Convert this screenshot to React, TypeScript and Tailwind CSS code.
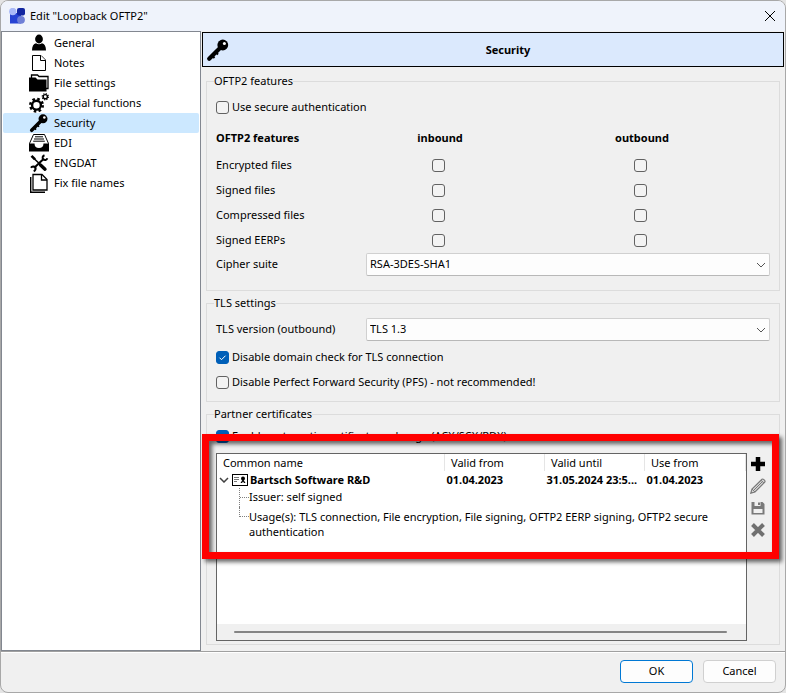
import type { ReactNode } from 'react';

type NavItem = { label: string; icon: ReactNode };

function KeyIcon({ className }: { className: string }) {
  return (
    <svg viewBox="0 0 24 24" className={className} aria-hidden="true">
      <circle cx="16.800" cy="7" r="5.400" fill="#000" />
      <path d="M14 10 3.200 20.800" stroke="#000" strokeWidth="4.200" strokeLinecap="round" />
      <path d="m6.500 18 2 2M10 14.500l2 2" stroke="#000" strokeWidth="2" />
      <circle cx="18.400" cy="5.400" r="1.500" fill="#fff" />
    </svg>
  );
}

function PersonIcon() {
  return (
    <svg viewBox="0 0 20 20" className="size-5" aria-hidden="true">
      <ellipse cx="10" cy="6" rx="3.900" ry="4.400" />
      <path d="M3 17.500c0-4 1.400-6.700 4-7.300 1.800 1.300 4.200 1.300 6 0 2.600.6 4 3.300 4 7.300z" />
    </svg>
  );
}

function PageIcon() {
  return (
    <svg viewBox="0 0 20 20" className="size-5" fill="#fff" stroke="#000" aria-hidden="true">
      <path d="M3.500 2.500h8.500l4.500 4.500v10.500h-13z" />
      <path d="M11.500 2.500v5h5" />
    </svg>
  );
}

function FolderIcon() {
  return (
    <svg viewBox="0 0 20 20" className="size-5" aria-hidden="true">
      <path d="M2.500 5V2h6l1.500 1.500h9v12H17" fill="#fff" stroke="#000" strokeWidth="1.300" />
      <path d="M0 4.500h6.500L8.500 6.500H17.500v12H0z" />
    </svg>
  );
}

function GearsIcon() {
  return (
    <svg viewBox="0 0 20 20" className="size-5" fill="none" stroke="#000" aria-hidden="true">
      <circle cx="7.500" cy="12.200" r="4.400" strokeWidth="2.400" />
      <circle cx="7.500" cy="12.200" r="6.200" strokeWidth="2.600" strokeDasharray="2.500 2.370" />
      <circle cx="16.300" cy="3.700" r="2.100" strokeWidth="1.400" />
      <circle cx="16.300" cy="3.700" r="3.100" strokeWidth="1.200" strokeDasharray="1.200 1.235" />
    </svg>
  );
}

function InboxIcon() {
  return (
    <svg viewBox="0 0 20 20" className="size-5" aria-hidden="true">
      <path d="M4.500 1.500h11l4 9v7H.5v-7z" fill="#fff" stroke="#000" />
      <path d="M6 3.800h8M5 6h10M4.200 8.200h11.600" stroke="#000" />
      <path d="M0 10.500h5.500c0 3 1.700 4.500 4.500 4.500s4.500-1.500 4.500-4.500H20v8H0z" />
    </svg>
  );
}

function ToolsIcon() {
  return (
    <svg viewBox="0 0 20 20" className="size-5" fill="none" stroke="#000" aria-hidden="true">
      <path d="m5 5.500 10 9.500" strokeWidth="1.500" />
      <path d="M14.500 6 5 15" strokeWidth="2" />
      <path d="m11.500 12 4.500 4.200" strokeWidth="3.400" strokeLinecap="round" />
      <path d="m2.500 2.800 3.500 3.500" strokeWidth="2.600" />
      <path d="M15.500 2.200c-2 .8-2.500 2.800-1.200 4 1.300 1.300 3.500.9 4-1M2 14.800c1-1.700 3.200-1.800 4.200-.6 1 1.300.3 3.300-1.500 4" strokeWidth="2" />
    </svg>
  );
}

function PagesIcon() {
  return (
    <svg viewBox="0 0 20 20" className="size-5" fill="none" stroke="#000" aria-hidden="true">
      <path d="M1.700 4v15.200H16" strokeWidth="1.400" />
      <path d="M4 1.500h9l5 5v10.500H4z" fill="#fff" strokeWidth="1.300" />
      <path d="M12.500 1.500v5.500H18" strokeWidth="1.300" />
    </svg>
  );
}

function LogoIcon() {
  return (
    <svg viewBox="0 0 16 16" className="size-4" aria-hidden="true">
      <path d="M1 5h11v10.500H1z" fill="#2743d3" />
      <rect x="8" y="0" width="8" height="7.500" rx="2" fill="#1226a0" />
      <circle cx="3.800" cy="3.500" r="3.700" fill="#a9b9f8" />
      <circle cx="12" cy="11.800" r="3.900" fill="#6f7fd6" />
    </svg>
  );
}

const navItems: NavItem[] = [
  { label: 'General', icon: <PersonIcon /> },
  { label: 'Notes', icon: <PageIcon /> },
  { label: 'File settings', icon: <FolderIcon /> },
  { label: 'Special functions', icon: <GearsIcon /> },
  { label: 'Security', icon: <KeyIcon className="size-5" /> },
  { label: 'EDI', icon: <InboxIcon /> },
  { label: 'ENGDAT', icon: <ToolsIcon /> },
  { label: 'Fix file names', icon: <PagesIcon /> },
];

const features = ['Encrypted files', 'Signed files', 'Compressed files', 'Signed EERPs'];

function Tick({ label, checked = false }: { label?: string; checked?: boolean }) {
  return (
    <span className="inline-grid size-[13px] shrink-0">
      <input
        type="checkbox"
        aria-label={label}
        defaultChecked={checked}
        className="peer col-start-1 row-start-1 size-[13px] appearance-none rounded-[3px] border border-[#626262] bg-[#f3f3f3] checked:border-[#005fb8] checked:bg-[#005fb8]"
      />
      <svg
        viewBox="0 0 13 13"
        className="pointer-events-none invisible col-start-1 row-start-1 size-[13px] peer-checked:visible"
        aria-hidden="true"
      >
        <path d="m3.500 6.700 2 2 4-4" fill="none" stroke="#fff" />
      </svg>
    </span>
  );
}

function CheckRow({ children, checked }: { children: string; checked?: boolean }) {
  return (
    <label className="flex h-[25px] items-center gap-[3px]">
      <Tick checked={checked} />
      {children}
    </label>
  );
}

function SelectRow({ id, label, options }: { id: string; label: string; options: string[] }) {
  return (
    <div className="flex items-center">
      <label htmlFor={id} className="w-[150px] shrink-0">{label}</label>
      <span className="grid flex-1 items-center">
        <select
          id={id}
          className="col-start-1 row-start-1 h-[23px] w-full appearance-none rounded-[2px] border border-[#d0d0d0] border-b-[#b8b8b8] bg-[#fdfdfd] px-[3px]"
        >
          {options.map((option) => (
            <option key={option}>{option}</option>
          ))}
        </select>
        <svg
          viewBox="0 0 10 6"
          className="pointer-events-none col-start-1 row-start-1 mr-1 h-[6px] w-[10px] justify-self-end"
          aria-hidden="true"
        >
          <path d="m1 1 4 4 4-4" fill="none" stroke="#555" />
        </svg>
      </span>
    </div>
  );
}

function Group({ title, className, children }: { title: string; className: string; children: ReactNode }) {
  return (
    <fieldset className={`min-w-0 border border-[#dcdcdc] px-[9px] ${className}`}>
      <legend className="-ml-0.5 h-4 leading-4">{title}</legend>
      {children}
    </fieldset>
  );
}

function CertificateTree() {
  return (
    <div className="flex min-w-0 flex-1 flex-col border border-[#646464] bg-white">
      <table className="w-full table-fixed border-collapse">
        <colgroup>
          <col />
          <col className="w-[100px]" />
          <col className="w-[100px]" />
          <col className="w-[101px]" />
        </colgroup>
        <thead>
          <tr className="h-[17px] text-left leading-4">
            <th className="border-r border-[#e5e5e5] px-1.5 font-normal">Common name</th>
            <th className="border-r border-[#e5e5e5] px-1.5 font-normal">Valid from</th>
            <th className="border-r border-[#e5e5e5] px-1.5 font-normal">Valid until</th>
            <th className="border-r border-[#e5e5e5] px-1.5 font-normal">Use from</th>
          </tr>
        </thead>
        <tbody>
          <tr className="h-[17px] font-bold leading-4">
            <td>
              <div className="flex items-center gap-0.5 pl-0.5">
                <svg viewBox="0 0 10 6" className="h-[6px] w-[10px]" aria-hidden="true">
                  <path d="m1 1 4 4 4-4" fill="none" stroke="#404040" strokeWidth="1.500" />
                </svg>
                <svg viewBox="0 0 16 12" className="ml-px h-3 w-4" aria-hidden="true">
                  <rect x="0.500" y="0.500" width="15" height="11" fill="#fff" stroke="#000" />
                  <path d="M2 3.500h5M2 5.500h5M2 7.500h3" stroke="#777" />
                  <circle cx="11" cy="4.500" r="2" />
                  <path d="m11 5-2.500 4h1.500l1-1.500 1 1.500H13.500z" />
                </svg>
                <span>Bartsch Software R&amp;D</span>
              </div>
            </td>
            <td className="px-0.5">01.04.2023</td>
            <td className="whitespace-nowrap pl-0.5">31.05.2024 23:5...</td>
            <td className="px-0.5">01.04.2023</td>
          </tr>
          <tr>
            <td colSpan={4}>
              <div className="flex h-[19px] items-center pl-[22px]">
                <span className="flex h-full w-2.5 items-center border-l border-dotted border-[#808080]">
                  <span className="w-full border-t border-dotted border-[#808080]" />
                </span>
                Issuer: self signed
              </div>
            </td>
          </tr>
          <tr>
            <td colSpan={4}>
              <div className="flex pl-[22px] pr-2">
                <span className="h-2.5 w-2.5 shrink-0 border-b border-l border-dotted border-[#808080]" />
                <p className="pt-0.5 leading-[15px]">
                  Usage(s): TLS connection, File encryption, File signing, OFTP2 EERP signing, OFTP2 secure authentication
                </p>
              </div>
            </td>
          </tr>
        </tbody>
      </table>
      <div className="mt-auto flex h-4 items-center bg-[#f0f0f0] pl-[17px] pr-[19px]">
        <div className="h-0.5 w-full rounded-full bg-[#858585]" />
      </div>
    </div>
  );
}

function CertificateActions() {
  return (
    <div className="flex w-[22px] flex-col pr-0.5">
      <button type="button" aria-label="Add" className="grid h-[22px] place-items-center">
        <svg viewBox="0 0 16 16" className="size-4" aria-hidden="true">
          <path d="M8 1v14M1 8h14" stroke="#000" strokeWidth="4.500" />
        </svg>
      </button>
      <button type="button" aria-label="Edit" className="grid h-[22px] place-items-center">
        <svg viewBox="0 0 16 16" className="size-4" fill="none" stroke="#7a7a7a" aria-hidden="true">
          <path d="M.8 15.200 2 11 12 1.200c1-.8 3.800 1.600 2.800 2.800L5 14z" fill="#d8d8d8" strokeWidth="1.200" />
          <path d="m3.500 12.500 9-9M11 2.200l2.800 2.800M2 11l3 3" />
        </svg>
      </button>
      <button type="button" aria-label="Save" className="grid h-[22px] place-items-center">
        <svg viewBox="0 0 16 16" className="size-4" aria-hidden="true">
          <path d="M1.500 2h11L14.500 4v10.500h-13z" fill="#7a7a7a" />
          <path d="M4.500 2h6v4h-6zM3.500 9h9v4h-9z" fill="#f0f0f0" />
          <path d="M8 2.500h2V5H8z" fill="#7a7a7a" />
        </svg>
      </button>
      <button type="button" aria-label="Delete" className="grid h-[22px] place-items-center">
        <svg viewBox="0 0 16 16" className="size-4" aria-hidden="true">
          <path d="m2.500 2.500 11 11M13.500 2.500l-11 11" stroke="#707070" strokeWidth="4" />
        </svg>
      </button>
    </div>
  );
}

export default function App() {
  return (
    <div className="min-h-screen bg-[#e4e4e4] font-['Noto_Sans','Open_Sans',sans-serif] text-[11px] text-black">
      <div className="flex min-h-screen flex-col overflow-hidden rounded-lg border border-[#a8a8a8] bg-[#f0f0f0]">
        <header className="flex h-[30px] items-center gap-[5px] bg-[#eff3fb] px-2">
          <LogoIcon />
          <h1>Edit "Loopback OFTP2"</h1>
          <button type="button" aria-label="Close" className="ml-auto grid size-3.5 place-items-center">
            <svg viewBox="0 0 12 12" className="size-3" aria-hidden="true">
              <path d="m1 1 10 10M11 1 1 11" stroke="#000" />
            </svg>
          </button>
        </header>

        <div className="flex flex-1 border-b border-[#a0a0a0]">
          <nav className="w-[200px] shrink-0 border border-[#828790] bg-white px-px pt-px">
            <ul>
              {navItems.map((item) => (
                <li key={item.label}>
                  <a
                    href="#"
                    className={
                      item.label === 'Security'
                        ? 'flex h-5 items-center gap-[5px] rounded-[2px] bg-[#cce8ff] pl-[26px]'
                        : 'flex h-5 items-center gap-[5px] pl-[26px]'
                    }
                  >
                    {item.icon}
                    {item.label}
                  </a>
                </li>
              ))}
            </ul>
          </nav>

          <main className="flex min-w-0 flex-1 flex-col px-px pb-1.5 pt-px">
            <div className="flex h-[35px] items-center border border-black bg-[#dbe9fd] px-[3px]">
              <KeyIcon className="size-6" />
              <h2 className="flex-1 pl-1.5 pt-0.5 text-center font-bold">Security</h2>
            </div>

            <div className="flex flex-1 flex-col gap-1 px-1 pt-1.5">
              <Group title="OFTP2 features" className="pb-3.5">
                <div className="pt-1.5">
                  <CheckRow>Use secure authentication</CheckRow>
                </div>
                <table className="mt-[5px] w-full table-fixed">
                  <colgroup>
                    <col className="w-[150px]" />
                    <col className="w-[144px]" />
                    <col />
                  </colgroup>
                  <thead>
                    <tr className="h-7">
                      <th className="pb-0.5 text-left">OFTP2 features</th>
                      <th className="pb-0.5 pl-1">inbound</th>
                      <th className="pb-0.5 pl-1">outbound</th>
                    </tr>
                  </thead>
                  <tbody>
                    {features.map((feature) => (
                      <tr key={feature} className="h-[25px]">
                        <td>{feature}</td>
                        <td>
                          <div className="flex justify-center"><Tick label={`${feature} inbound`} /></div>
                        </td>
                        <td>
                          <div className="flex justify-center"><Tick label={`${feature} outbound`} /></div>
                        </td>
                      </tr>
                    ))}
                  </tbody>
                </table>
                <SelectRow id="cipher" label="Cipher suite" options={['RSA-3DES-SHA1']} />
              </Group>

              <Group title="TLS settings" className="pb-1.5">
                <div className="pb-1 pt-[7px]">
                  <SelectRow id="tls" label="TLS version (outbound)" options={['TLS 1.3']} />
                </div>
                <CheckRow checked>Disable domain check for TLS connection</CheckRow>
                <CheckRow>Disable Perfect Forward Security (PFS) - not recommended!</CheckRow>
              </Group>

              <div className="relative flex flex-1 flex-col">
                <Group title="Partner certificates" className="flex flex-1 flex-col pb-[3px]">
                  <div className="pb-1 pt-0.5">
                    <CheckRow checked>Enable automatic certificate exchange (ACX/SCX/RDX)</CheckRow>
                  </div>
                  <div className="flex min-h-[180px] flex-1 gap-px">
                    <CertificateTree />
                    <CertificateActions />
                  </div>
                </Group>
                <div className="pointer-events-none absolute -left-1 right-px top-7 h-[125px] border-[7px] border-[#ff0000] drop-shadow-[3px_3px_2px_rgba(0,0,0,0.6)]" />
              </div>
            </div>
          </main>
        </div>

        <footer className="flex justify-end gap-2.5 border-t border-white px-[9px] pb-[9px] pt-[7px]">
          <button type="button" className="h-[23px] w-[73px] rounded-[4px] border border-[#0078d4] bg-[#fdfdfd]">OK</button>
          <button type="button" className="h-[23px] w-[73px] rounded-[4px] border border-[#d0d0d0] bg-[#fdfdfd]">Cancel</button>
        </footer>
      </div>
    </div>
  );
}
